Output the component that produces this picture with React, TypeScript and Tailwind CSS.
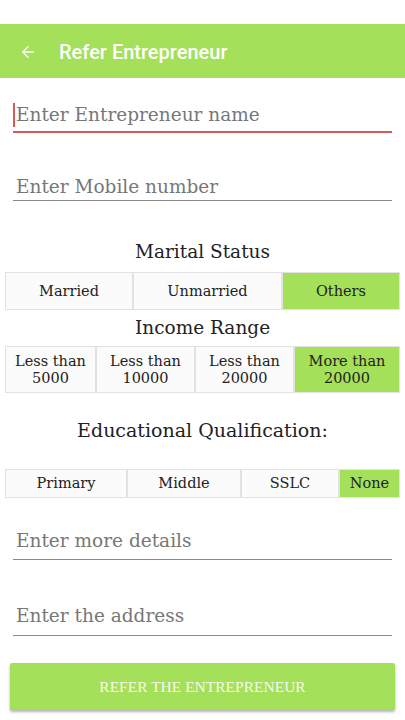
import { ArrowLeft } from "lucide-react"

const serif = "font-['DejaVu_Serif','Liberation_Serif',serif]"

interface SegmentOption {
  label: string[]
  width: string
}

const Segments = ({ options, active, rowClass }: { options: SegmentOption[]; active: number; rowClass: string }) => (
  <div className={`mx-[5px] flex ${rowClass}`}>
    {options.map((opt, i) => (
      <div
        key={opt.label.join(" ")}
        className={`flex flex-col items-center justify-center border border-[#e2e2e2] text-center text-[14.5px] leading-[17px] text-[#222] ${opt.width} ${
          i === active ? "bg-[#a4e05a] border-[#a4e05a]" : "bg-[#fbfbfb]"
        }`}
      >
        {opt.label.map((l) => (
          <span key={l}>{l}</span>
        ))}
      </div>
    ))}
  </div>
)

export default function App() {
  return (
    <div className={`flex h-[720px] w-[405px] flex-col bg-white ${serif}`}>
      <div className="h-[24px] bg-white" />
      <header className="flex h-[54px] items-center bg-[#a4e05a] pt-[1px] font-['Roboto',sans-serif] text-white">
        <ArrowLeft className="ml-[19px] h-[18px] w-[18px]" strokeWidth={1.75} />
        <h1 className="ml-[22px] text-[20px] font-medium">Refer Entrepreneur</h1>
      </header>

      <div className="mx-[13px] mt-[25px] flex items-center border-b-2 border-[#d45a5a] pb-[4px]">
        <span className="h-[24px] w-[2px] bg-[#d45a5a]" />
        <span className="ml-[1px] text-[18.5px] leading-[24px] text-[#777]">Enter Entrepreneur name</span>
      </div>

      <div className="mx-[13px] mt-[42px] border-b border-[#8a8a8a] pb-[1px] pl-[3px] text-[18.5px] leading-[24px] text-[#777]">
        Enter Mobile number
      </div>

      <h2 className="mt-[39px] text-center text-[18.5px] leading-[24px] text-[#222]">Marital Status</h2>
      <Segments
        rowClass="mt-[8px] h-[38px]"
        active={2}
        options={[
          { label: ["Married"], width: "w-[128px]" },
          { label: ["Unmarried"], width: "w-[149px]" },
          { label: ["Others"], width: "flex-1" },
        ]}
      />

      <h2 className="mt-[6px] text-center text-[18.5px] leading-[24px] text-[#222]">Income Range</h2>
      <Segments
        rowClass="mt-[6px] h-[47px]"
        active={3}
        options={[
          { label: ["Less than", "5000"], width: "w-[91px]" },
          { label: ["Less than", "10000"], width: "w-[99px]" },
          { label: ["Less than", "20000"], width: "w-[99px]" },
          { label: ["More than", "20000"], width: "flex-1" },
        ]}
      />

      <h2 className="mt-[25px] text-center text-[19px] leading-[24px] text-[#222]">Educational Qualification:</h2>
      <Segments
        rowClass="mt-[27px] h-[29px]"
        active={3}
        options={[
          { label: ["Primary"], width: "w-[122px]" },
          { label: ["Middle"], width: "w-[114px]" },
          { label: ["SSLC"], width: "w-[98px]" },
          { label: ["None"], width: "flex-1" },
        ]}
      />

      <div className="mx-[13px] mt-[31px] border-b border-[#8a8a8a] pb-[6px] pl-[3px] text-[18.5px] leading-[24px] text-[#777]">
        Enter more details
      </div>
      <div className="mx-[13px] mt-[44px] border-b border-[#8a8a8a] pb-[7px] pl-[3px] text-[18.5px] leading-[24px] text-[#777]">
        Enter the address
      </div>

      <button className="mx-[10px] mt-[27px] h-[47px] rounded-[2px] bg-[#a4e05a] font-['Liberation_Serif',serif] text-[15.5px] text-[#f6fbef] shadow-[0_2px_3px_rgba(0,0,0,0.3)]">
        REFER THE ENTREPRENEUR
      </button>
    </div>
  )
}
